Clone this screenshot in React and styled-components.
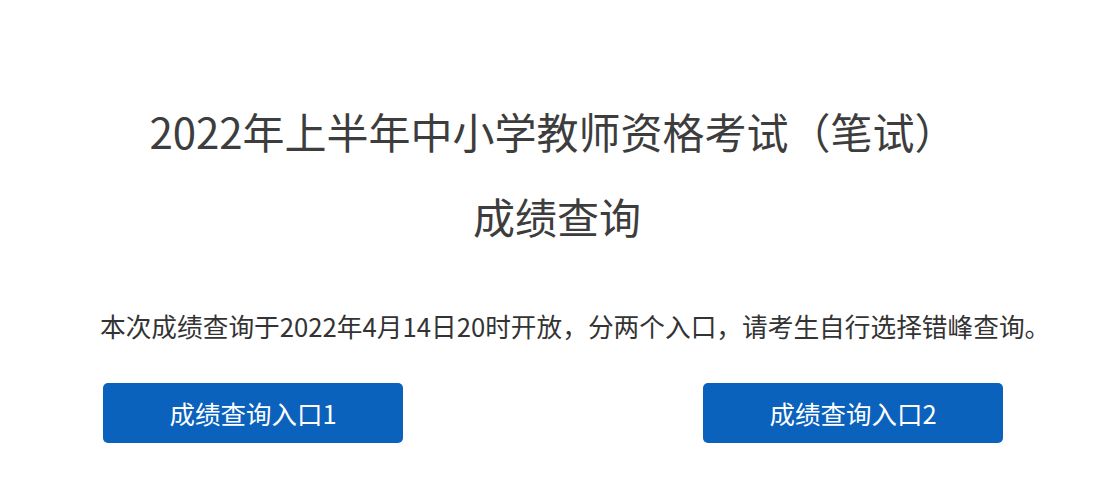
import React from 'react';
import styled, { createGlobalStyle } from 'styled-components';

const GlobalStyle = createGlobalStyle`
  html, body {
    margin: 0;
    padding: 0;
    background: #fff;
  }
  body {
    font-family: 'Noto Sans CJK SC', 'Noto Sans', sans-serif;
    color: #3a3a3a;
  }
`

const Page = styled.div`
  width: 900px;
  margin: 0 auto;
  padding-top: 88px;
`

const TitleBlock = styled.div`
  display: flex;
  flex-direction: column;
  align-items: center;
`

const TitleLine = styled.h1`
  margin: 0;
  font-size: 42px;
  font-weight: 400;
  line-height: 85px;
  white-space: nowrap;
  color: #3d3d3d;
  padding-left: ${props => props.$shift || 0}px;
`

const Notice = styled.p`
  margin: 48px 0 0 -3px;
  font-size: 25.7px;
  line-height: 40px;
  white-space: nowrap;
  color: #333;
`

const ButtonRow = styled.div`
  display: flex;
  justify-content: space-between;
  margin-top: 37px;
`

const EntryButton = styled.a`
  display: flex;
  align-items: center;
  justify-content: center;
  width: 300px;
  height: 60px;
  padding-bottom: 2px;
  box-sizing: border-box;
  border-radius: 5px;
  background-color: #0b62bd;
  color: #fff;
  font-size: 25.5px;
  text-decoration: none;
  cursor: pointer;
`

export default function App() {
  return (
    <>
      <GlobalStyle />
      <Page>
        <TitleBlock>
          <TitleLine>2022年上半年中小学教师资格考试（笔试）</TitleLine>
          <TitleLine $shift={8}>成绩查询</TitleLine>
        </TitleBlock>
        <Notice>本次成绩查询于2022年4月14日20时开放，分两个入口，请考生自行选择错峰查询。</Notice>
        <ButtonRow>
          <EntryButton>成绩查询入口1</EntryButton>
          <EntryButton>成绩查询入口2</EntryButton>
        </ButtonRow>
      </Page>
    </>
  )
}
